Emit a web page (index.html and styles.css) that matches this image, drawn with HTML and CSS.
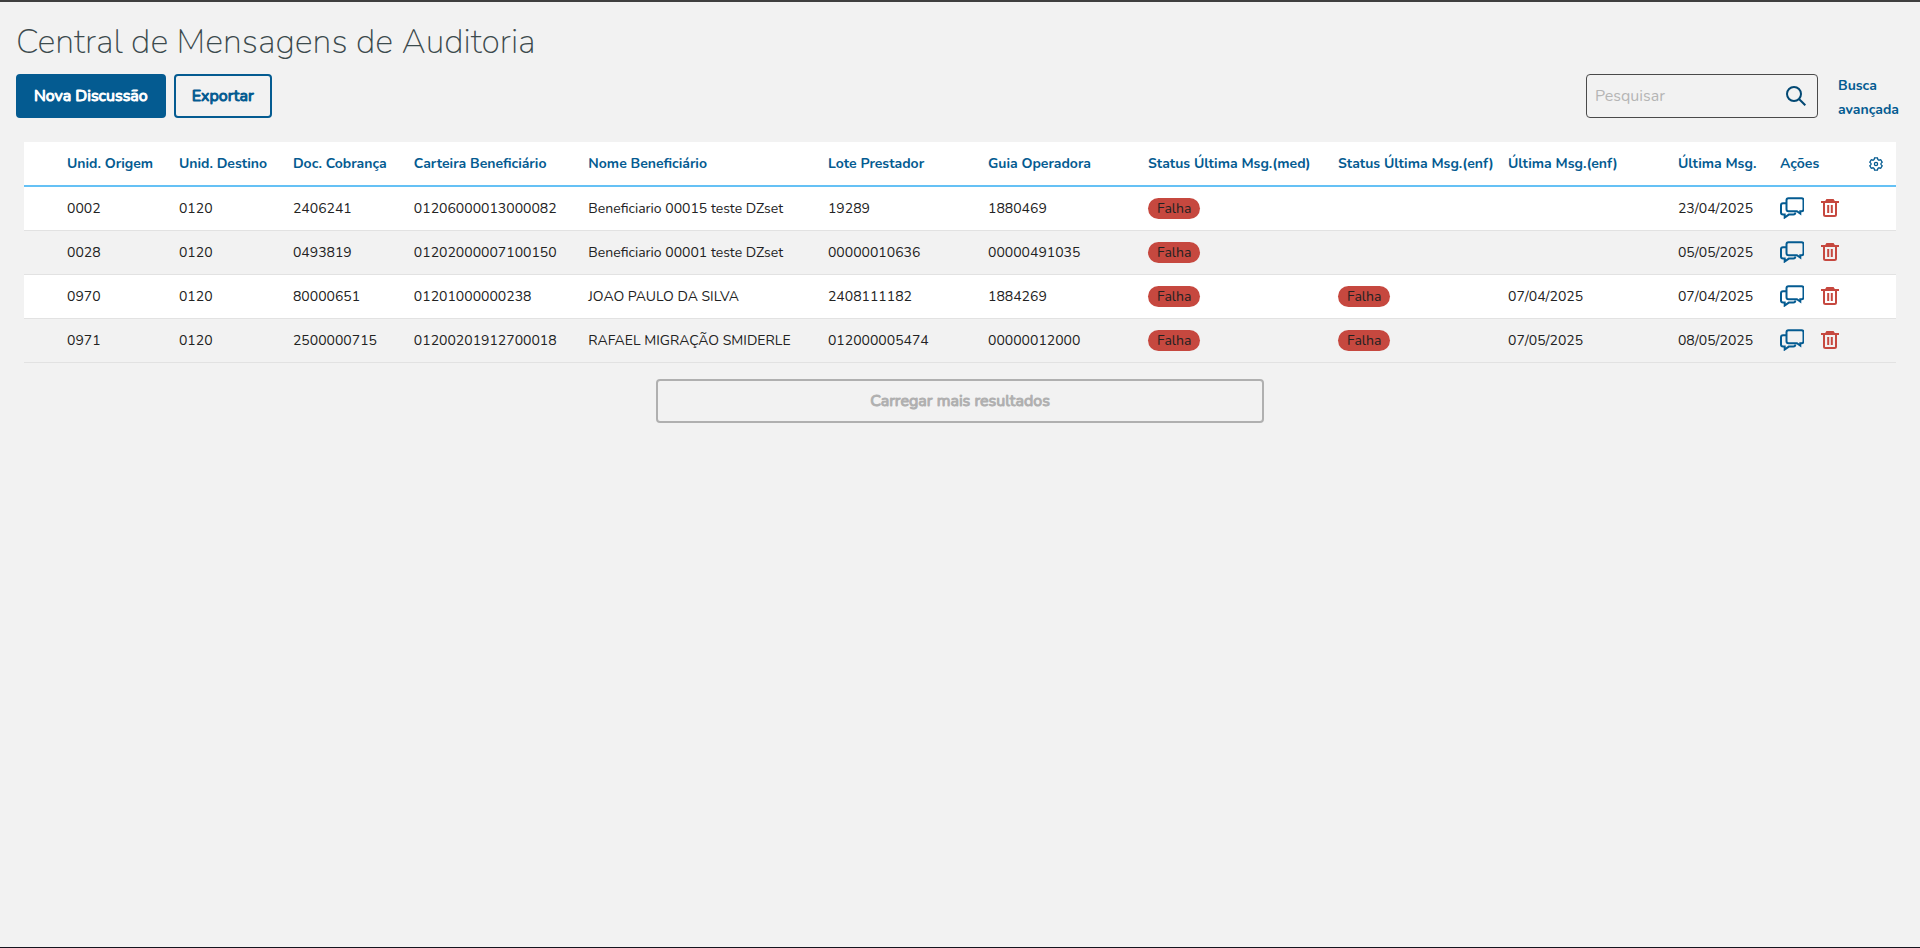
FILE: index.html
```html
<!DOCTYPE html>
<html lang="pt-br">
<head>
    <meta charset="UTF-8">
    <meta name="viewport" content="width=device-width, initial-scale=1.0">
    <title>Central de Mensagens de Auditoria</title>
    <link rel="stylesheet" href="styles.css">
</head>
<body>
    <svg class="sprite" aria-hidden="true">
        <symbol id="icon-chat" viewBox="0 0 24 22">
            <path d="M8.500 1.200h13a2 2 0 0 1 2 2v9a2 2 0 0 1-2 2h-1.200v2.300l-3.400-2.300H8.500a2 2 0 0 1-2-2v-9a2 2 0 0 1 2-2z"/>
            <path d="M6 6.200H3a2 2 0 0 0-2 2v7.300a2 2 0 0 0 2 2h1.700v3l4.100-2.900h4.500a2 2 0 0 0 2-2"/>
        </symbol>
        <symbol id="icon-trash" viewBox="0 0 18 18">
            <path d="M0 3h18M5 2.500l1-1.500h6l1 1.500M3 4v11.500a1.500 1.500 0 0 0 1.500 1.500h9a1.500 1.500 0 0 0 1.500-1.500V4M7.200 6v8M10.800 6v8"/>
        </symbol>
    </svg>

    <main class="pagina">
        <h1>Central de Mensagens de Auditoria</h1>

        <div class="barra">
            <button type="button" class="button button-primary">Nova Discussão</button>
            <button type="button" class="button">Exportar</button>
            <form class="busca" role="search">
                <input type="text" id="pesquisa" placeholder="Pesquisar" aria-label="Pesquisar">
                <button type="button" class="busca-button" aria-label="Buscar">
                    <svg viewBox="0 0 20 20"><circle cx="8" cy="8" r="7"/><path d="M13 13l6.300 6.300"/></svg>
                </button>
            </form>
            <a href="#" class="busca-avancada">Busca avançada</a>
        </div>

        <div class="resultado">
            <table id="mensagens-table">
                <colgroup>
                    <col class="col-selecao">
                    <col class="col-origem">
                    <col class="col-destino">
                    <col class="col-doc">
                    <col class="col-carteira">
                    <col class="col-nome">
                    <col class="col-guia">
                    <col class="col-guia">
                    <col class="col-status">
                    <col class="col-data">
                    <col class="col-data">
                    <col class="col-ultima">
                    <col>
                </colgroup>
                <thead>
                    <tr>
                        <th></th>
                        <th>Unid. Origem</th>
                        <th>Unid. Destino</th>
                        <th>Doc. Cobrança</th>
                        <th>Carteira Beneficiário</th>
                        <th>Nome Beneficiário</th>
                        <th>Lote Prestador</th>
                        <th>Guia Operadora</th>
                        <th>Status Última Msg.(med)</th>
                        <th>Status Última Msg.(enf)</th>
                        <th>Última Msg.(enf)</th>
                        <th>Última Msg.</th>
                        <th>
                            <div class="acoes-titulo">
                                Ações
                                <button type="button" class="config" aria-label="Configurar colunas">
                                    <svg viewBox="0 0 14 14"><path d="M5.600.8h2.800l.5 1.700 1.100.7 1.700-.5 1.500 2.500-1.200 1.200v1.200l1.200 1.200-1.500 2.500-1.700-.5-1.100.7-.5 1.700H5.600l-.5-1.700-1.100-.7-1.700.5L.8 8.800 2 7.600V6.400L.8 5.200l1.500-2.500 1.700.5 1.100-.7z"/><circle cx="7" cy="7" r="1.600"/></svg>
                                </button>
                            </div>
                        </th>
                    </tr>
                </thead>
                <tbody>
                    <tr>
                        <td></td>
                        <td>0002</td>
                        <td>0120</td>
                        <td>2406241</td>
                        <td>01206000013000082</td>
                        <td>Beneficiario 00015 teste DZset</td>
                        <td>19289</td>
                        <td>1880469</td>
                        <td><span class="falha">Falha</span></td>
                        <td></td>
                        <td></td>
                        <td>23/04/2025</td>
                        <td>
                            <div class="acoes">
                                <button type="button" class="chat" aria-label="Mensagens"><svg><use href="#icon-chat"/></svg></button>
                                <button type="button" class="excluir" aria-label="Excluir"><svg><use href="#icon-trash"/></svg></button>
                            </div>
                        </td>
                    </tr>
                    <tr>
                        <td></td>
                        <td>0028</td>
                        <td>0120</td>
                        <td>0493819</td>
                        <td>01202000007100150</td>
                        <td>Beneficiario 00001 teste DZset</td>
                        <td>00000010636</td>
                        <td>00000491035</td>
                        <td><span class="falha">Falha</span></td>
                        <td></td>
                        <td></td>
                        <td>05/05/2025</td>
                        <td>
                            <div class="acoes">
                                <button type="button" class="chat" aria-label="Mensagens"><svg><use href="#icon-chat"/></svg></button>
                                <button type="button" class="excluir" aria-label="Excluir"><svg><use href="#icon-trash"/></svg></button>
                            </div>
                        </td>
                    </tr>
                    <tr>
                        <td></td>
                        <td>0970</td>
                        <td>0120</td>
                        <td>80000651</td>
                        <td>01201000000238</td>
                        <td>JOAO PAULO DA SILVA</td>
                        <td>2408111182</td>
                        <td>1884269</td>
                        <td><span class="falha">Falha</span></td>
                        <td><span class="falha">Falha</span></td>
                        <td>07/04/2025</td>
                        <td>07/04/2025</td>
                        <td>
                            <div class="acoes">
                                <button type="button" class="chat" aria-label="Mensagens"><svg><use href="#icon-chat"/></svg></button>
                                <button type="button" class="excluir" aria-label="Excluir"><svg><use href="#icon-trash"/></svg></button>
                            </div>
                        </td>
                    </tr>
                    <tr>
                        <td></td>
                        <td>0971</td>
                        <td>0120</td>
                        <td>2500000715</td>
                        <td>01200201912700018</td>
                        <td>RAFAEL MIGRAÇÃO SMIDERLE</td>
                        <td>012000005474</td>
                        <td>00000012000</td>
                        <td><span class="falha">Falha</span></td>
                        <td><span class="falha">Falha</span></td>
                        <td>07/05/2025</td>
                        <td>08/05/2025</td>
                        <td>
                            <div class="acoes">
                                <button type="button" class="chat" aria-label="Mensagens"><svg><use href="#icon-chat"/></svg></button>
                                <button type="button" class="excluir" aria-label="Excluir"><svg><use href="#icon-trash"/></svg></button>
                            </div>
                        </td>
                    </tr>
                </tbody>
            </table>
            <button type="button" class="button carregar" disabled>Carregar mais resultados</button>
        </div>
    </main>
</body>
</html>
```

FILE: styles.css
```css
* {
    box-sizing: border-box;
}
body {
    margin: 0;
    min-height: 100vh;
    border-top: 2px solid #3f3f3f;
    border-bottom: 1px solid #15151f;
    background-color: #f2f2f2;
    color: #222;
    font-family: Nunito, Lato, sans-serif;
    font-size: 14px;
}
button, input {
    font-family: inherit;
}
svg {
    display: block;
    fill: none;
    stroke: currentColor;
    stroke-width: 2;
}
.sprite {
    position: absolute;
    width: 0;
    height: 0;
}
.pagina {
    padding: 16px;
}
h1 {
    margin: 0 0 8px;
    color: #3c4a4d;
    font-size: 34px;
    font-weight: 200;
    line-height: 48px;
}
.barra {
    display: flex;
    align-items: flex-start;
    gap: 8px;
}
.button {
    height: 44px;
    padding: 0 16px;
    border: 2px solid #045b91;
    border-radius: 4px;
    background-color: transparent;
    color: #045b91;
    font-size: 16px;
    font-weight: 400;
    -webkit-text-stroke: 1px;
    cursor: pointer;
}
.button-primary {
    background-color: #045b91;
    color: #fff;
}
.busca {
    display: flex;
    align-items: center;
    width: 232px;
    height: 44px;
    margin-left: auto;
    border: 1px solid #4a4a4a;
    border-radius: 4px;
}
.busca input {
    flex: 1;
    min-width: 0;
    height: 100%;
    padding: 0 8px;
    border: none;
    outline: none;
    background: none;
    color: #222;
    font-size: 16px;
}
.busca input::placeholder {
    color: #b5b5b5;
}
.busca-button {
    padding: 0 11px;
    border: none;
    background: none;
    color: #024873;
    cursor: pointer;
}
.busca-button svg {
    width: 20px;
    height: 20px;
}
.busca-avancada {
    width: 66px;
    margin-left: 12px;
    color: #045b91;
    font-weight: 700;
    line-height: 24px;
    text-decoration: none;
}
.resultado {
    margin: 20px 8px 0;
}
table {
    width: 100%;
    table-layout: fixed;
    border-collapse: separate;
    border-spacing: 0;
}
th, td {
    height: 44px;
    padding: 0 0 0 8px;
    border-bottom: 1px solid #e2e2e2;
    text-align: left;
    white-space: nowrap;
}
td {
    padding-bottom: 1px;
}
th {
    height: 45px;
    border-bottom: 2px solid #65c1f5;
    background-color: #fff;
    color: #045b91;
    font-weight: 700;
}
tbody tr:nth-child(odd) {
    background-color: #fff;
}
.col-selecao { width: 1.87%; }
.col-origem { width: 5.98%; }
.col-destino { width: 6.09%; }
.col-doc { width: 6.46%; }
.col-carteira { width: 9.32%; }
.col-nome { width: 12.8%; }
.col-guia { width: 8.55%; }
.col-status { width: 10.15%; }
.col-data { width: 9.08%; }
.col-ultima { width: 5.45%; }
.falha {
    display: inline-block;
    padding: 0 9px;
    border-radius: 11px;
    background-color: #c6483f;
    line-height: 21px;
}
.acoes-titulo, .acoes {
    display: flex;
    align-items: center;
}
.acoes-titulo {
    justify-content: space-between;
    padding-right: 13px;
}
.acoes {
    gap: 17px;
    padding-bottom: 1px;
}
.config, .chat, .excluir {
    padding: 0;
    border: none;
    background: none;
    color: #045b91;
    cursor: pointer;
}
.config svg {
    width: 14px;
    height: 14px;
    stroke-width: 1.3;
}
.chat svg {
    width: 24px;
    height: 22px;
}
.excluir {
    color: #c6483f;
}
.excluir svg {
    width: 18px;
    height: 18px;
}
.carregar {
    display: block;
    width: calc(100% / 3 - 16px);
    margin: 16px auto 0;
    border-color: #b0b0b0;
    color: #b0b0b0;
    cursor: default;
}
```
